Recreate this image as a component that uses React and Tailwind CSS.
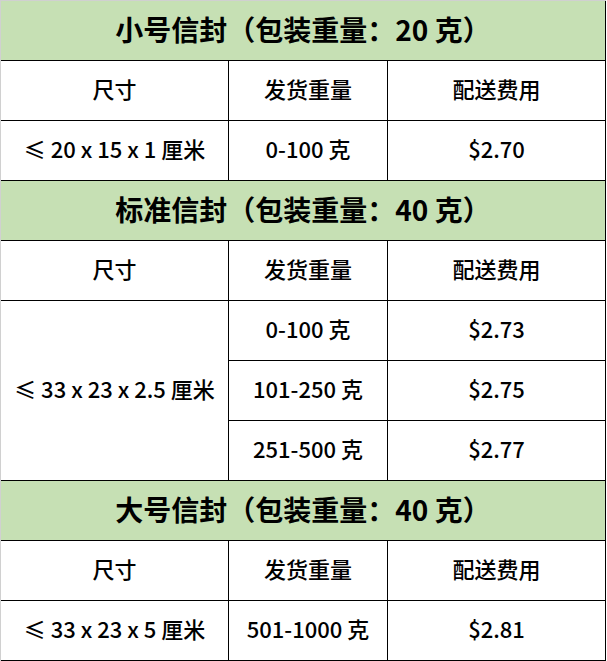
import React from "react";

const font = { fontFamily: '"Noto Sans CJK SC", "Noto Sans", sans-serif' };

function Title({ children }) {
  return (
    <div className="col-span-3 h-[60px] pb-1 flex items-center justify-center bg-[#c6e0b4] border-r border-b border-black text-[28px] font-bold text-black">
      {children}
    </div>
  );
}

function Cell({ children, className = "" }) {
  return (
    <div className={"h-[60px] pb-1 flex items-center justify-center border-r border-b border-black text-[22px] font-medium text-black " + className}>
      {children}
    </div>
  );
}

export default function App() {
  return (
    <div className="w-[607px] h-[661px] bg-white" style={font}>
      <div className="w-[606px] border-l border-t border-l-[#d0d0d0] border-t-[#d0d0d0] grid grid-cols-[228px_159px_218px]">
        <Title>小号信封（包装重量：20 克）</Title>
        <Cell>尺寸</Cell>
        <Cell>发货重量</Cell>
        <Cell>配送费用</Cell>
        <Cell>≤ 20 x 15 x 1 厘米</Cell>
        <Cell>0-100 克</Cell>
        <Cell>$2.70</Cell>

        <Title>标准信封（包装重量：40 克）</Title>
        <Cell>尺寸</Cell>
        <Cell>发货重量</Cell>
        <Cell>配送费用</Cell>
        <Cell className="row-span-3 !h-[180px]">≤ 33 x 23 x 2.5 厘米</Cell>
        <Cell>0-100 克</Cell>
        <Cell>$2.73</Cell>
        <Cell>101-250 克</Cell>
        <Cell>$2.75</Cell>
        <Cell>251-500 克</Cell>
        <Cell>$2.77</Cell>

        <Title>大号信封（包装重量：40 克）</Title>
        <Cell>尺寸</Cell>
        <Cell>发货重量</Cell>
        <Cell>配送费用</Cell>
        <Cell>≤ 33 x 23 x 5 厘米</Cell>
        <Cell>501-1000 克</Cell>
        <Cell>$2.81</Cell>
      </div>
    </div>
  );
}
